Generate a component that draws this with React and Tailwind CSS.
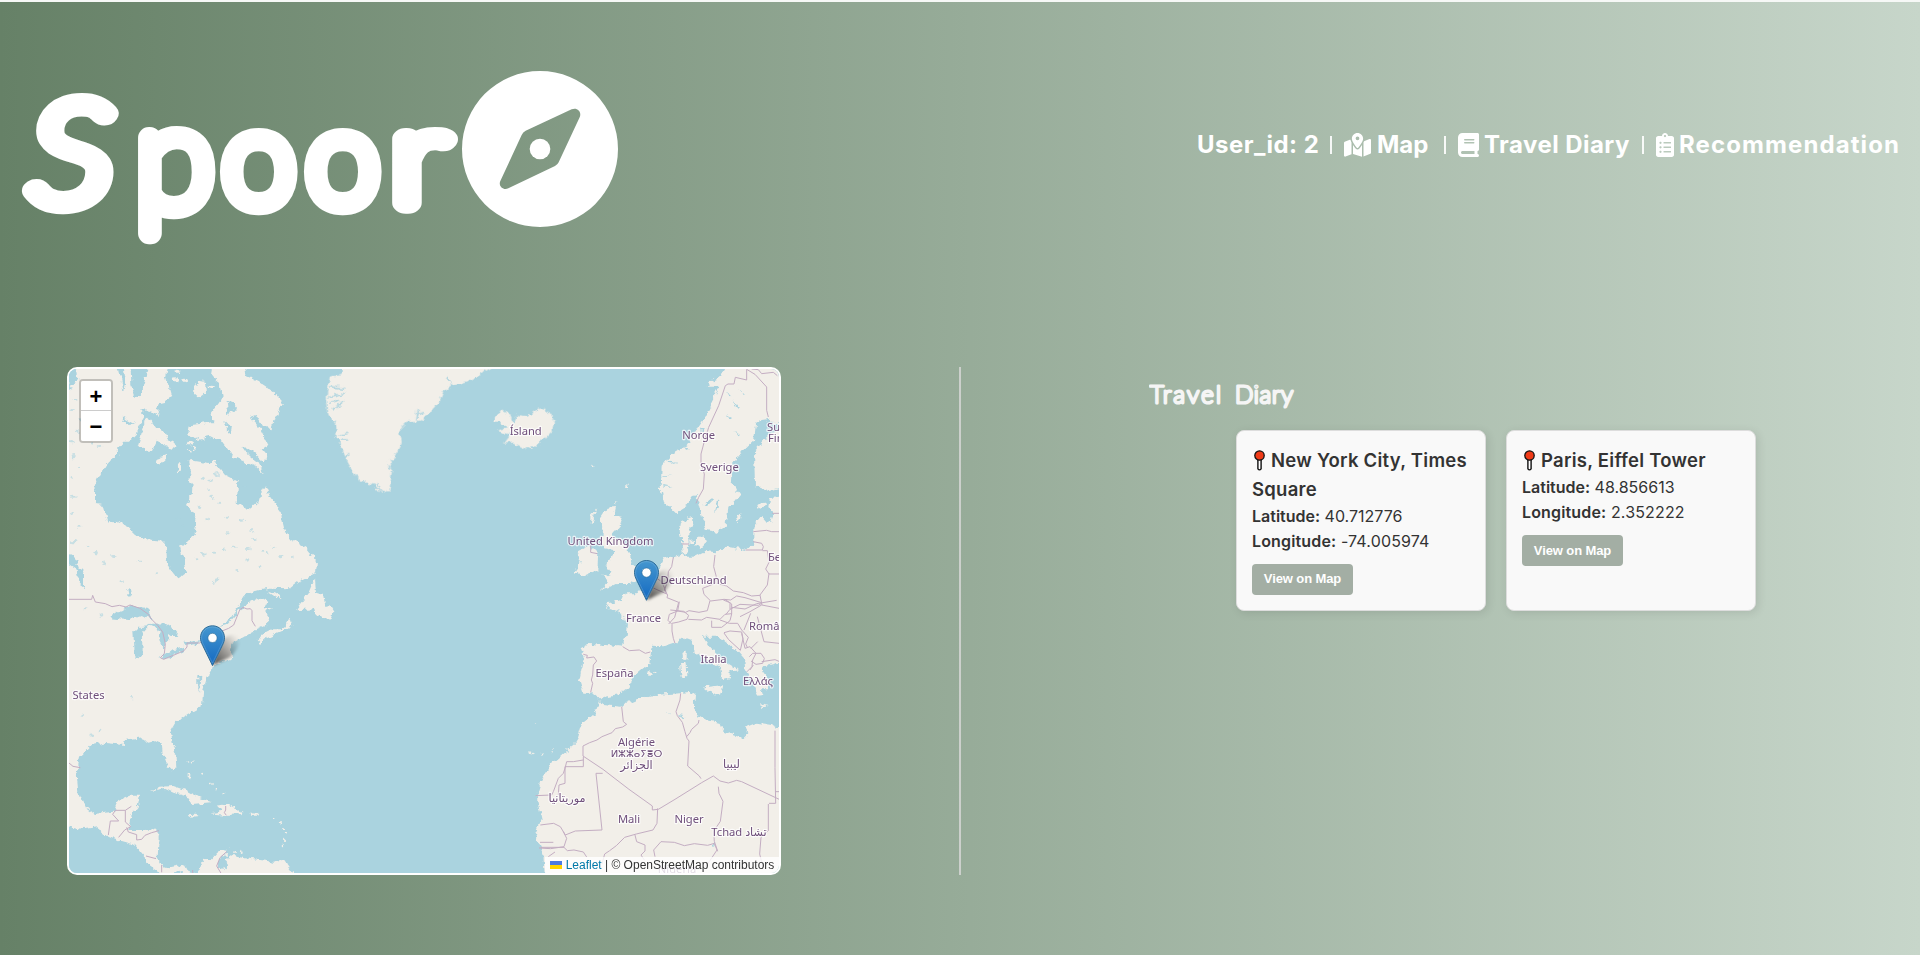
import React from "react";
import { FaBook, FaMapLocationDot } from "react-icons/fa6";
import { FaClipboardList } from "react-icons/fa";

const LAND = "#f2efe9";
const WATER = "#aad3df";
const BORDER = "#c3adc2";

const northAmerica =
  "10,20 175,20 185,62 190,92 197,60 190,20 212,20 214,75 226,110 238,112 250,75 268,20 325,20 318,50 332,100 318,125 298,130 290,150 300,172 275,150 262,155 240,146 256,166 235,200 230,225 210,245 190,245 170,268 172,285 150,300 130,325 112,362 102,390 102,432 128,434 142,488 165,482 200,498 225,522 270,545 315,548 318,610 340,640 355,658 378,640 370,600 360,560 385,548 408,515 412,485 400,455 378,435 395,405 398,370 385,360 392,350 385,305 400,302 450,310 460,303 495,345 535,365 530,430 568,448 595,425 602,400 615,375 630,410 660,450 672,500 690,535 742,565 768,600 765,640 715,665 690,685 630,683 580,690 545,715 530,745 505,780 478,798 500,792 530,760 565,730 600,712 622,722 612,742 640,745 612,752 630,778 620,795 575,816 550,832 515,850 510,870 520,895 505,900 460,915 455,930 440,955 430,990 425,1040 380,1065 345,1090 330,1115 335,1150 350,1190 352,1220 340,1235 325,1220 308,1180 305,1150 285,1140 265,1145 245,1132 195,1140 190,1155 130,1148 95,1155 60,1190 50,1240 55,1295 75,1340 105,1362 160,1355 175,1320 205,1307 237,1307 230,1340 215,1360 205,1410 250,1410 285,1408 298,1420 292,1455 290,1495 300,1515 330,1525 365,1518 395,1532 405,1550 378,1550 350,1532 330,1545 300,1538 255,1505 255,1490 225,1455 180,1442 140,1425 110,1402 70,1408 10,1392";

const northIslands = [
  "460,20 555,20 560,50 595,65 640,95 672,130 652,145 660,165 640,180 635,208 610,200 590,165 570,172 600,205 625,255 605,268 620,285 615,308 575,272 543,256 560,280 595,308 615,345 590,322 520,290 490,250 450,228 405,238 385,222 390,196 462,186 450,162 486,112 478,70 455,50",
  "402,75 415,62 435,66 438,102 420,115 403,100",
  "262,170 285,200 322,222 325,240 347,252 335,266 290,245 275,278 260,278 257,260 233,262 250,200",
  "290,295 318,285 318,296 300,314 288,306",
  "350,312 360,306 364,328 354,334",
  "380,266 396,272 390,282",
  "398,260 411,264 403,272",
  "765,652 745,700 708,748 765,745 770,765 795,775 815,780 820,755 808,735 796,738 790,705 768,698",
  "620,695 645,700 665,713 650,715",
  "590,840 600,852 620,835 665,815 697,797 690,772 670,805 640,805 600,825",
  "272,1297 298,1280 340,1278 380,1292 420,1315 452,1327 400,1332 385,1310 340,1298 310,1284",
  "468,1337 500,1332 550,1355 548,1362 500,1365 450,1360 485,1355",
  "572,1360 598,1361 595,1367 573,1367",
  "385,1363 405,1361 417,1368 395,1370",
  "383,1238 394,1250 390,1262 383,1250",
  "405,1550 420,1520 432,1498 460,1495 475,1478 502,1468 500,1482 475,1500 470,1520 490,1528 505,1485 555,1495 600,1500 640,1505 675,1498 680,1515 705,1550",
];

const lakes = [
  "150,775 185,750 210,735 240,748 265,750 275,775 240,765 200,780",
  "220,820 245,798 268,795 245,820 248,870 240,895 225,892",
  "262,792 320,790 340,805 358,828 335,828 325,820 325,840 310,865 298,840 302,812",
  "298,895 330,875 372,860 372,870 320,898",
  "370,845 415,838 410,852 375,858",
  "25,580 45,590 58,625 72,640 72,680 60,672 48,625 25,610",
  "202,688 212,684 216,702 206,708",
  "490,1508 500,1500 508,1510 503,1525 492,1522",
  "415,1255 420,1265 410,1262",
  "185,170 225,192 210,194 190,182",
  "500,122 520,130 535,148 515,150 505,168",
  "490,180 515,205 512,222 498,210",
  "25,30 50,28 55,60 30,75 40,90 25,85",
  "412,945 424,950 420,995 412,975",
];

const speckles = [
  [45, 120], [38, 150], [60, 180], [52, 215], [35, 245], [75, 238], [95, 250], [120, 258], [42, 290], [55, 320],
  [35, 350], [40, 410], [35, 460], [60, 500], [42, 545], [85, 560], [110, 578], [160, 588], [130, 610], [240, 605],
  [185, 665], [75, 745], [120, 765], [290, 640], [430, 355], [452, 362], [470, 345], [440, 390], [455, 412], [420, 440],
  [480, 430], [500, 470], [545, 480], [555, 378], [575, 510], [520, 560], [490, 568], [460, 578], [430, 582], [408, 595],
  [565, 565], [610, 575], [625, 580], [640, 560], [560, 600], [460, 668], [468, 660], [530, 630], [600, 620], [580, 540],
  [660, 590], [700, 590], [355, 480], [365, 500], [215, 1010], [68, 1064], [95, 1128], [120, 1112], [440, 480], [505, 520],
];

const northEurope = [
  "500,80 515,62 545,50 560,20 730,20 730,190 700,190 690,176 665,180 648,192 642,240 612,268 580,310 575,370 600,405 580,430 565,440 560,495 530,515 500,510 490,485 475,430 466,400 440,435 405,457 375,430 362,380 365,320 400,280 440,255 470,210 490,180 520,120 540,80",
  "730,205 690,220 665,250 642,275 645,378 680,392 730,380",
  "730,408 690,415 685,440 700,460 690,490 668,465 640,500 640,550 620,570 560,560 525,580 490,575 460,590 430,590 425,555 418,500 430,480 458,470 462,490 445,520 450,560 440,580 400,592 372,598 358,625 350,650 325,670 300,690 290,702 250,702 245,720 225,725 198,730 208,748 240,755 262,790 262,830 730,830",
  "655,432 675,425 678,435 660,450",
  "468,535 490,525 495,550 480,565 468,555",
  "450,543 462,540 462,555 452,555",
  "590,475 604,458 600,480 592,490",
  "200,440 228,438 222,465 248,470 240,495 215,525 250,545 270,580 275,615 300,625 290,660 270,672 230,672 205,685 183,690 210,665 190,650 215,640 195,610 215,600 220,570 195,565 185,540 190,505 180,470",
  "110,575 150,555 175,580 172,630 125,650 103,635 122,605",
  "155,465 172,445 160,480 152,492",
  "152,315 170,312 162,322",
  "255,385 264,365 260,392",
  "225,425 232,420 228,432",
];

const southEurope = [
  "258,12 300,2 318,-20 780,-20 780,190 740,200 730,215 755,250 740,265 722,265 730,288 715,290 700,250 675,205 672,175 650,150 600,110 578,85 552,85 550,108 572,142 600,175 655,208 628,212 630,235 606,240 602,205 560,180 530,158 510,122 485,113 465,130 430,142 395,140 388,190 345,225 325,262 300,282 258,290 240,298 215,278 190,278 178,240 192,175 182,145 205,132 260,135 308,140 318,100 322,60 300,28",
  "240,300 250,315 300,320 350,298 400,285 480,280 510,275 525,285 522,320 530,345 560,360 600,370 610,395 670,415 685,400 680,380 710,368 755,375 790,392 790,840 75,840 70,760 45,705 65,660 50,590 65,540 95,490 130,460 165,430 180,380 225,340",
  "480,195 500,190 502,230 486,237",
  "487,160 500,150 500,175 490,180",
  "552,262 605,256 597,284 570,275",
  "380,222 392,214 397,222 387,228",
  "400,214 410,212 408,217",
  "715,312 748,318 730,322",
  "30,455 36,452 38,462",
  "60,462 72,460 66,468",
  "95,460 102,448 100,462",
  "44,366 52,368 48,370",
];

const Poly = ({ list, fill }) => list.map((p, i) => <polygon key={i} points={p} fill={fill} />);

const Pin = ({ x, y }) => (
  <g transform={`translate(${x} ${y})`}>
    <path d="M13 40 L19 19 Q28 6 38 11 Q42 20 30 32 Z" fill="url(#cast)" filter="url(#shade)" />
    <path
      d="M12.5.5C5.7.5.5 5.9.5 12.4c0 3 .9 5.3 2.1 7.6L12.5 40.3 22.4 20c1.200-2.300 2.100-4.600 2.100-7.600C24.500 5.900 19.300.500 12.500.500z"
      fill="url(#pin)"
      stroke="#2e6c97"
      strokeWidth="1"
    />
    <path d="M12.500 1.600C6.300 1.600 1.600 6.500 1.600 12.400c0 2.700.8 4.900 2 7.100L12.500 37.800l8.900-18.300c1.200-2.200 2-4.400 2-7.100C23.400 6.500 18.700 1.600 12.500 1.600z" fill="none" stroke="#fff" strokeOpacity="0.15" />
    <circle cx="12.500" cy="12.600" r="4.600" fill="#fff" stroke="#2e6c97" strokeWidth="0.600" />
  </g>
);

const places = [
  ["Ísland", 525.7, 434.500], ["Norge", 698.7, 439], ["Sverige", 719.3, 470.500],
  ["United Kingdom", 610.500, 544.500], ["Deutschland", 693.5, 584.300], ["France", 643.500, 621.800],
  ["España", 614.500, 676.500], ["Italia", 713.500, 662.500], ["Ελλάς", 758, 684.500],
  ["Algérie", 636.500, 745.500], ["ⵍⵣⵣⴰⵢⴻⵔ", 636.500, 757], ["الجزائر", 636.500, 769],
  ["ليبيا", 731.500, 768], ["موريتانيا", 567, 801.500], ["Mali", 629, 822.500],
  ["Niger", 689, 822.500], ["Tchad تشاد", 739, 835.500], ["States", 88.500, 698.500],
  ["Nigeria", 677, 873],
];

const edgePlaces = [["Su", 767, 430.500], ["Fin", 768, 442.300], ["Бе", 768, 560.500], ["Româ", 749, 629.500]];

const labelSize = (t) => (/[ⴰ-ⵯ]/.test(t) ? 10 : 11.2);

function MapDrawing() {
  return (
    <svg className="block h-full w-full" viewBox="69 369 710 504">
      <defs>
        <filter id="coast" x="-5%" y="-5%" width="110%" height="110%">
          <feTurbulence type="fractalNoise" baseFrequency="0.16" numOctaves="3" seed="4" result="n" />
          <feDisplacementMap in="SourceGraphic" in2="n" scale="7" xChannelSelector="R" yChannelSelector="G" />
        </filter>
        <filter id="shade" x="-30%" y="-30%" width="160%" height="160%">
          <feGaussianBlur stdDeviation="1.800" />
        </filter>
        <linearGradient id="cast" x1="0" y1="1" x2="1" y2="0">
          <stop offset="0" stopColor="#000" stopOpacity="0.700" />
          <stop offset="0.900" stopColor="#000" stopOpacity="0.020" />
        </linearGradient>
        <linearGradient id="pin" x1="0" y1="0" x2="0" y2="1">
          <stop offset="0" stopColor="#4597cf" />
          <stop offset="0.800" stopColor="#1d72c4" />
        </linearGradient>
      </defs>
      <rect x="69" y="369" width="710" height="504" fill={WATER} />
      <g filter="url(#coast)">
        <g transform="translate(60 360) scale(.33333)">
          <polygon points={northAmerica} fill={LAND} />
          <Poly list={northIslands} fill={LAND} />
          <Poly list={lakes} fill={WATER} />
          {speckles.map(([x, y], i) => (
            <ellipse key={i} cx={x} cy={y} rx={i % 3 ? 7 : 4} ry={i % 2 ? 3 : 5} fill={WATER} opacity="0.600" />
          ))}
          {[[640, 1375], [660, 1390], [672, 1405], [678, 1420], [675, 1440], [665, 1455], [525, 1475], [545, 1478], [395, 1208], [430, 1240], [455, 1272], [490, 1300], [470, 1290], [385, 1208], [345, 58], [375, 62], [350, 35], [390, 250], [455, 80]].map(([x, y], i) => (
            <ellipse key={i} cx={x} cy={y} rx={i > 13 ? 9 : 3} ry={i > 13 ? 6 : 4} fill={LAND} />
          ))}
        </g>
        <g transform="translate(320 360) scale(.33333)">
          <polygon fill={LAND} points="65,20 520,20 440,65 395,75 370,95 360,120 330,160 300,182 260,185 240,205 245,250 218,300 205,390 185,398 160,370 120,365 85,310 65,260 50,235 48,195 25,160 20,110 30,50 65,45" />
          <polygon fill={LAND} points="522,185 545,150 570,165 580,190 592,165 625,170 660,145 685,155 705,185 700,210 660,250 620,268 580,248 552,250 572,225 530,212 560,205 540,185" />
          <g stroke={WATER} strokeWidth="4" fill="none">
            <path d="M30 80l40 5M25 110l50-10M35 150l35-25M30 130l30 -8M55 225l30 -5M60 240l25 0M290 180l5-30M380 50l15 20M170 370l10 12M70 290l18 -6M205 300l15 10M205 320l15 8M290 165l20 -8" />
          </g>
        </g>
        <g transform="translate(540 360) scale(.33333)">
          <Poly list={northEurope} fill={LAND} />
          <g fill={WATER}>
            <path d="M490 435l25-20 5 10-15 15zM530 425l8-8-2 25-10 15zM150 530l10 25-8 5z" />
            <path d="M560 95l15 15-4 3zM595 85l20 20-4 3zM575 120l25 25-4 2zM555 165l20 10-4 6zM580 210l20 15-4 4z" />
            <path d="M365 350l30-5-30 9zM370 375l25 5-25 0zM385 300l30 12-28-6zM430 262l25 5-20 2zM480 210l20-3-18 9z" />
          </g>
        </g>
        <g transform="translate(520 600) scale(.33333)">
          <Poly list={southEurope} fill={LAND} />
          <g fill={WATER}>
            <path d="M725 202l55-6v75l-16-12-8-22-24-20zM780 275l-30 12 30 8z" />
            <path d="M442 340l6 2-3 4zM472 342l22 3v3l-20-1zM476 350l20 1-2 3zM580 728l8 3-3 10z" />
          </g>
        </g>
      </g>
      <g fill="none" stroke={BORDER} strokeWidth="3" strokeLinejoin="round">
        <g transform="translate(60 360) scale(.33333)">
          <path d="M27 718h68l3-12 8 20 30 5 20 9 22-4 20 5 12-6 30 10 25 18 10 15 18 18 15 20 8 35-3 30-12 12 10 5 60-25 10-12 0-12 38 0 12-10 25-14 50-20 15-10 18-45 10-8 12 5 10-1 5 6 0 30 10 17" />
          <path d="M27 1209l12 10 22 4M145 1425l6-42h25l-18-20 8-12h30v35l16 14-18 10-18 22M196 1351l18-12M200 1402l5 14 25 8 0 16 15-2 10-12 20-8 22-6M258 1488l30 8M305 1515v22M398 1530v16M500 1475l-20 18-10 25 15 25M497 1338v12l-4 8 6 8" />
        </g>
        <g transform="translate(540 360) scale(.33333)">
          <path d="M468 430l8-18 14-25 3-45-10-30 0-30 8-30 15-50 30-65 20-60 8-5h18l4-20 34 8 0-32 25 15 35 38 0 70 5 20M635 27l20 2 10 12 35-4 12 10M717 460h-20M640 515l40-4 15 4h22M640 545l25 5 5 10-3 10h-50M667 572l15 0 5 35-10 20 10 15h30M687 640l-5 35-22 30 6 30M425 552h22M400 592l-5 28-10 15-2 30-10 25 10 15-2 8 35 14-12 45-18 20M350 655l15 10 10 22 5 15-40-18M525 585l-4 35 8 30-3 20-38 15 4 18 20 20 40-5 20 2 18-12 25 5 50 15M530 670l30 8 20 15 30 5 25 10 25-2M510 722l-8 30-25 5-30-5-10 5-30-5M550 720l20 8 0 20-12 15M570 748l30-15 55 3 10-6M600 770l30-15 35-20 52 10M152 555v22l20 4" />
        </g>
        <g transform="translate(520 600) scale(.33333)">
          <path d="M308 140l20 12 30-2 18 10 15-4M190 163l12 3-2 8 22-3 8 12-10 12-2 30-4 15 4 10-6 27M465 130l-5-15-4-22 0-20-12-12 4-18 25-10 5-28M456 70l20-4 25-8 5-12-15-12-40-4M505 58l40 2 15-8 40 6 15-15 20-2M575 62l0 20 30 0 25-20 5-20 0-30-20-14M635 22l40 5 35-16 60-10M600 60l28 10 25 0 12 20 20 22-8 20 6 12M612 98l18-5 35 3 4 20-8 35-35-32-14-20M692 40l-20 50M665 100l10 45 15-5 18 20-10 20-2 20-15 15M688 170l10-10 25 0 10 15-5 15-20 3-15-10M713 125l-20 20M712 50l20 75 45 5M725 185l40-6 12 5M700 195l-10 15" />
          <path d="M305 320l5 45 10 8-12 8-22 5-10 12-30 12-15 10-22 8-20 10 0 30 60 40 78 60 70 50 0 12 18-2 50-30 80-50 35-20 20 15 25 6 25-8 15 4 138 65M190 470v30h-55M190 480l-30 5-20 0-5 20-5 15-15 15-15 40-5 10-48 2M135 500l0 50-18 5-2 30M248 520h-20l18 170-80 3-30 12-15-25-20-10-40 5M413 625l-2 45-12 20-50 12-35 10-25 25-20 15-15 10-8 30M482 280l-2 20-12 35 4 12 15 20 8 28 6 20 6 8-4 75 35 30 5 8M500 410l10-12 5-10 20-18 2-10M765 392v110l2 108h-20M778 575h-12M745 612l0 80-22 20-4 50 10 40M595 560l2 20 12 24-8 60-20 30 2 30 10 30M345 705l5 20 25 10 0 18-12 12 10 15M405 770l-4-20 22-25 40 2 30 10 30-6 40 5 20-6 8 20-20 30-15 20M130 695l10 20-8 25-40 6-35-2M60 727h40M62 742h70l10 10 20-2 28 6 10 15M85 770l20-14" />
        </g>
      </g>
      <Pin x={200} y={625.3} />
      <g
        className="font-['Noto_Sans','DejaVu_Sans',sans-serif]"
        fill="#6f4f7b"
        stroke="#fff"
        strokeOpacity="0.75"
        strokeWidth="2.400"
        strokeLinejoin="round"
        paintOrder="stroke"
      >
        {places.map(([t, x, y]) => (
          <text key={t} x={x} y={y} textAnchor="middle" fontSize={labelSize(t)}>{t}</text>
        ))}
        {edgePlaces.map(([t, x, y]) => (
          <text key={t} x={x} y={y} fontSize={labelSize(t)}>{t}</text>
        ))}
      </g>
      <Pin x={634} y={560} />
    </svg>
  );
}

function MapPanel() {
  return (
    <div className="relative h-[508px] w-[714px] overflow-hidden rounded-[10px] border-2 border-white bg-[#aad3df]">
      <MapDrawing />
      <div className="absolute top-[10px] left-[10px] flex w-[34px] flex-col rounded-[4px] border-2 border-black/20 bg-clip-padding font-['Liberation_Sans',sans-serif] text-[22px] font-bold text-black">
        <button className="flex h-[30px] items-center justify-center rounded-t-[2px] border-b border-[#ccc] bg-white pt-[2px] leading-none">+</button>
        <button className="flex h-[30px] items-center justify-center rounded-b-[2px] bg-white pt-px leading-none">−</button>
      </div>
      <div className="absolute right-0 bottom-0 flex h-4 w-[234px] items-center justify-center bg-white/80 font-['Liberation_Sans',sans-serif] text-[12px] whitespace-pre text-[#333]">
        <svg className="mr-1 h-2 w-3" viewBox="0 0 12 8">
          <path fill="#4c7be1" d="M0 0h12v4H0z" />
          <path fill="#ffd500" d="M0 4h12v4H0z" />
        </svg>
        <a className="text-[#0078a8]">Leaflet</a> | © OpenStreetMap contributors
      </div>
    </div>
  );
}

const Compass = () => (
  <svg className="size-[156px]" viewBox="19 18 468 468" fill="#fff">
    <path
      fillRule="evenodd"
      d="M253 18a234 234 0 1 0 0 468a234 234 0 1 0 0-468zM210 197L348 133C365 126 379 141 372 157L309 292Q306 299 298 303L158 370C143 377 127 363 134 348L198 210Q202 201 210 197z"
    />
    <circle cx="253" cy="252" r="31" />
  </svg>
);

const RedPin = () => (
  <svg className="mr-[6px] ml-[2px] inline-block h-[21px] w-[11px] align-[-4px]" viewBox="0 0 11 21">
    <path d="M3.900 9h3.200v9.800q-1.600 2.200-3.200 0z" fill="#fff" stroke="#111" strokeWidth="1.400" />
    <circle cx="5.500" cy="5.500" r="4.700" fill="#f03a17" stroke="#111" strokeWidth="1.300" />
  </svg>
);

function Card({ title, lat, lng }) {
  return (
    <article className="w-[250px] rounded-[8px] border border-[#ddd] bg-[#f9f9f9] p-[15px] text-[#333] shadow-[2px_2px_10px_rgba(0,0,0,0.1)]">
      <h3 className="text-[18.500px] leading-[28.800px] font-semibold tracking-[0.250px] whitespace-pre-line">
        <RedPin />
        {title}
      </h3>
      <p className="text-[16px] leading-[25px]"><b className="font-semibold">Latitude:</b> {lat}</p>
      <p className="text-[16px] leading-[25px] tracking-[0.150px]"><b className="font-semibold">Longitude:</b> {lng}</p>
      <button className="mt-[10px] block h-[31px] w-[101px] rounded-[4px] bg-[#a3aea4] font-['Liberation_Sans',sans-serif] text-[13px] font-bold tracking-[-0.100px] text-white">
        View on Map
      </button>
    </article>
  );
}

const Bar = () => <span className="h-[18px] w-[2px] bg-white/90" />;

export default function App() {
  return (
    <div className="flex h-[955px] w-[1920px] flex-col overflow-hidden border-t-2 border-[#f6f8f6] bg-[linear-gradient(90deg,#668167_0%,#c7d6ca_100%)] font-['Inter',sans-serif]">
      <header className="flex h-[365px] items-start justify-between">
        <div className="flex pt-[69px] pl-[18px]">
          <svg className="h-[200px] w-[444px] overflow-visible" viewBox="18 71 444 200">
            <text
              y="203"
              className="font-['Lato',sans-serif] text-[130px] font-thin"
              fill="#fff"
              stroke="#fff"
              strokeWidth="22"
              strokeLinejoin="round"
              strokeLinecap="round"
            >
              <tspan x="31" textLength="81" lengthAdjust="spacingAndGlyphs" className="text-[138px] italic">S</tspan>
              <tspan x="136" y="207" className="text-[142px]">p</tspan>
              <tspan x="223" y="203">o</tspan>
              <tspan x="307">o</tspan>
              <tspan x="391" textLength="56" lengthAdjust="spacingAndGlyphs">r</tspan>
            </text>
          </svg>
          <Compass />
        </div>
        <nav className="flex h-[286px] items-center pr-[20px] text-[24px] font-bold text-white">
          <span className="w-[134px] pl-px tracking-[0.500px]">User_id: 2</span>
          <Bar />
          <a className="flex w-[112px] items-center gap-[6px] pl-[12px]"><FaMapLocationDot className="h-[24px] w-[27px] shrink-0" /><span>Map</span></a>
          <Bar />
          <a className="flex w-[196px] items-center gap-[5px] pl-[12px]"><FaBook className="h-[24px] w-[21px] shrink-0" /><span className="tracking-[0.450px] whitespace-nowrap">Travel Diary</span></a>
          <Bar />
          <a className="flex w-[256px] items-center gap-[5px] pl-[12px]"><FaClipboardList className="h-[24px] w-[18px] shrink-0" /><span className="tracking-[1.100px]">Recommendation</span></a>
        </nav>
      </header>
      <main className="flex h-[508px]">
        <section className="w-[959px] pl-[67px]"><MapPanel /></section>
        <div className="w-[2px] bg-[#ccd0cc]" />
        <section className="flex-1 pl-[188px]">
          <svg className="mt-[10px] block h-[36px] w-[180px]" viewBox="0 0 180 36">
            <text y="26" className="font-['Lato',sans-serif] text-[24px] font-thin" fill="#f5f5f5" stroke="#f5f5f5" strokeWidth="3.200" strokeLinejoin="round">
              <tspan x="1" textLength="71">Travel</tspan> <tspan x="86" textLength="58">Diary</tspan>
            </text>
          </svg>
          <div className="mt-[17px] flex items-stretch gap-5 pl-[87px]">
            <Card title={"New York City, Times\nSquare"} lat="40.712776" lng="-74.005974" />
            <Card title="Paris, Eiffel Tower" lat="48.856613" lng="2.352222" />
          </div>
        </section>
      </main>
    </div>
  );
}
